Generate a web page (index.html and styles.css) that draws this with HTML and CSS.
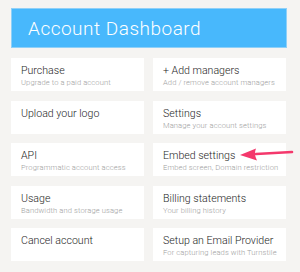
FILE: index.html
```html
<!DOCTYPE html>
<html lang="en">
<head>
    <meta charset="UTF-8">
    <meta name="viewport" content="width=device-width, initial-scale=1.0">
    <title>Account Dashboard</title>
    <link rel="stylesheet" href="styles.css">
</head>
<body>
    <div class="container">
        <!-- Header -->
        <div class="dash-header">
            <h1>Account Dashboard</h1>
        </div>

        <!-- Dashboard cards -->
        <div class="dash-grid">
            <a href="#" class="dash-card">
                <span class="card-title">Purchase</span>
                <span class="card-desc">Upgrade to a paid account</span>
            </a>
            <a href="#" class="dash-card">
                <span class="card-title">+ Add managers</span>
                <span class="card-desc">Add / remove account managers</span>
            </a>
            <a href="#" class="dash-card">
                <span class="card-title">Upload your logo</span>
            </a>
            <a href="#" class="dash-card">
                <span class="card-title">Settings</span>
                <span class="card-desc">Manage your account settings</span>
            </a>
            <a href="#" class="dash-card">
                <span class="card-title">API</span>
                <span class="card-desc">Programmatic account access</span>
            </a>
            <a href="#" class="dash-card has-arrow">
                <span class="card-title">Embed settings</span>
                <span class="card-desc">Embed screen, Domain restriction</span>
                <svg class="pointer" width="56" height="16" viewBox="0 0 56 16">
                    <path d="M17 9 L53 7" stroke="#f4386c" stroke-width="2.6" stroke-linecap="round" fill="none"/>
                    <path d="M1 10 L17 3.5 Q14.5 9 18 15.5 Z" fill="#f4386c"/>
                </svg>
            </a>
            <a href="#" class="dash-card">
                <span class="card-title">Usage</span>
                <span class="card-desc">Bandwidth and storage usage</span>
            </a>
            <a href="#" class="dash-card">
                <span class="card-title">Billing statements</span>
                <span class="card-desc">Your billing history</span>
            </a>
            <a href="#" class="dash-card">
                <span class="card-title">Cancel account</span>
            </a>
            <a href="#" class="dash-card">
                <span class="card-title">Setup an Email Provider</span>
                <span class="card-desc">For capturing leads with Turnstile</span>
            </a>
        </div>
    </div>
</body>
</html>
```

FILE: styles.css
```css
body { margin: 0; background-color: #f5f4f2; font-family: Roboto, "Liberation Sans", sans-serif; }
.container { padding: 8px 13px 0 11px; }
.dash-header { height: 40px; background-color: #48b8fc; border: 1px solid #8fd0f8; box-sizing: border-box; display: flex; align-items: center; padding-left: 16px; }
.dash-header h1 { margin: 0; font-size: 19px; font-weight: 300; color: #ffffff; letter-spacing: 0.5px; }
.dash-grid { margin-top: 10px; display: grid; grid-template-columns: 133px 133px; grid-auto-rows: 33px; column-gap: 9px; row-gap: 9.5px; }
.dash-card { background-color: #ffffff; text-decoration: none; padding: 6px 10px 0; display: flex; flex-direction: column; white-space: nowrap; }
.card-title { font-size: 10.6px; font-weight: 300; color: #1e1e1e; line-height: 13px; }
.card-desc { font-size: 7.6px; font-weight: 300; color: #a0a0a0; line-height: 11px; letter-spacing: 0.1px; }
.has-arrow { position: relative; }
.pointer { position: absolute; left: 86px; top: 2px; }
```
